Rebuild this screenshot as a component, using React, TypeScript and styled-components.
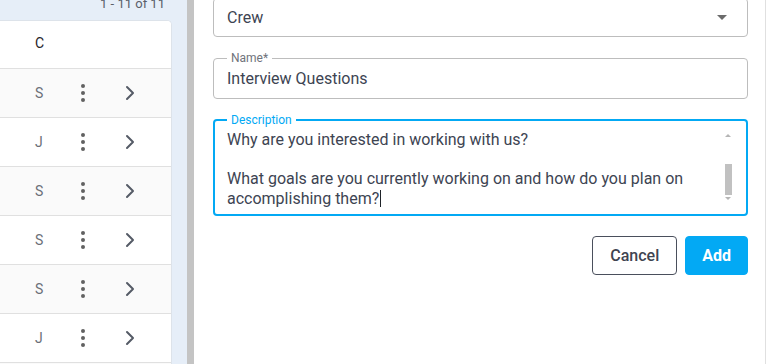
import styled, { createGlobalStyle } from 'styled-components';

const GlobalStyle = createGlobalStyle`
  html, body {
    margin: 0;
    padding: 0;
    background: #ffffff;
    font-family: Roboto, "Liberation Sans", Arial, sans-serif;
  }

  #root {
    height: 364px;
    overflow: hidden;
  }
`;

const rows = [
  { id: 1, letter: 'S' },
  { id: 2, letter: 'J' },
  { id: 3, letter: 'S' },
  { id: 4, letter: 'S' },
  { id: 5, letter: 'S' },
  { id: 6, letter: 'J' },
  { id: 7, letter: 'S' },
];

const MoreIcon = () => (
  <svg width="24" height="24" viewBox="0 0 24 24" aria-hidden>
    <circle cx="12" cy="5" r="2" fill="#616161" />
    <circle cx="12" cy="12" r="2" fill="#616161" />
    <circle cx="12" cy="19" r="2" fill="#616161" />
  </svg>
);

const ChevronIcon = () => (
  <svg width="24" height="24" viewBox="0 0 24 24" aria-hidden>
    <path d="M9 6l6 6-6 6" fill="none" stroke="#555b66" strokeWidth="2" strokeLinecap="round" strokeLinejoin="round" />
  </svg>
);

export default function App() {
  return (
    <>
      <GlobalStyle />
      <Page>
        <ListPane>
          <Pager>
            <span>1 - 11 of 11</span>
          </Pager>
          <Card>
            <Row $header>
              <Letter $header>C</Letter>
            </Row>
            {rows.map(({ id, letter }, index) => (
              <Row key={id} $shade={index % 2 === 0}>
                <Letter>{letter}</Letter>
                <IconCell>
                  <MoreIcon />
                </IconCell>
                <IconCell>
                  <ChevronIcon />
                </IconCell>
              </Row>
            ))}
          </Card>
        </ListPane>
        <Splitter />
        <Dialog>
          <SelectBox>
            <FieldValue>Crew</FieldValue>
            <Caret />
          </SelectBox>
          <Field>
            <Legend>Name*</Legend>
            <FieldValue>Interview Questions</FieldValue>
          </Field>
          <Field $focused>
            <Legend $focused>Description</Legend>
            <TextAreaBody>
              <TextLines>
                <Line>Why are you interested in working with us?</Line>
                <Line>&nbsp;</Line>
                <Line>What goals are you currently working on and how do you plan on</Line>
                <Line>
                  accomplishing them?
                  <Cursor />
                </Line>
              </TextLines>
              <ScrollBar>
                <ArrowUp />
                <Track>
                  <Thumb />
                </Track>
                <ArrowDown />
              </ScrollBar>
            </TextAreaBody>
          </Field>
          <Actions>
            <Button $variant="outline">Cancel</Button>
            <Button $variant="primary">Add</Button>
          </Actions>
        </Dialog>
      </Page>
    </>
  );
}

const Page = styled.div`
  display: flex;
  height: 364px;
  padding-right: 2px;
  box-sizing: border-box;
  overflow: hidden;
  background: #ffffff;
`;

const ListPane = styled.div`
  display: flex;
  flex-direction: column;
  width: 187px;
  flex-shrink: 0;
  background: #e6eef8;
`;

const Pager = styled.div`
  display: flex;
  justify-content: flex-end;
  height: 20px;
  width: 172px;
  padding-right: 7px;
  box-sizing: border-box;

  & > span {
    margin-top: -4px;
    font-size: 13px;
    line-height: 16px;
    color: #5a5f6a;
  }
`;

const Card = styled.div`
  width: 172px;
  flex: 1;
  background: #ffffff;
  border-top: 1px solid #dde3ea;
  border-right: 1px solid #dde3ea;
  border-top-right-radius: 5px;
  box-sizing: border-box;
  overflow: hidden;
`;

const Row = styled.div<{ $header?: boolean; $shade?: boolean }>`
  display: grid;
  grid-template-columns: 36px 47px 24px;
  align-items: center;
  height: ${({ $header }) => ($header ? '44px' : '48px')};
  padding-left: 35px;
  padding-bottom: ${({ $header }) => ($header ? '3px' : '0')};
  background: ${({ $shade }) => ($shade ? '#fafafa' : '#ffffff')};
  border-bottom: 1px solid #e0e0e0;
`;

const Letter = styled.span<{ $header?: boolean }>`
  font-size: 14px;
  color: ${({ $header }) => ($header ? '#1f2329' : '#6b6f78')};
`;

const IconCell = styled.span`
  display: flex;
  width: 24px;
  height: 24px;
  margin-top: -1px;
`;

const Splitter = styled.div`
  width: 7px;
  flex-shrink: 0;
  background: #c4c4c4;
`;

const Dialog = styled.div`
  flex: 1;
  display: flex;
  flex-direction: column;
  gap: 14px;
  margin-top: -2px;
  padding: 0 17px 0 19px;
  border-right: 1px solid #e0e0e0;
  background: #ffffff;
`;

const SelectBox = styled.div`
  display: flex;
  align-items: center;
  justify-content: space-between;
  height: 39px;
  padding: 0 20px 0 13px;
  border: 1px solid #bdbdbd;
  border-radius: 4px;
  box-sizing: border-box;
`;

const Caret = styled.span`
  width: 0;
  height: 0;
  border-left: 5px solid transparent;
  border-right: 5px solid transparent;
  border-top: 5px solid #6b6b6b;
`;

const FieldValue = styled.span`
  font-size: 16px;
  line-height: 19px;
  color: #3d4452;
`;

const Field = styled.fieldset<{ $focused?: boolean }>`
  display: flex;
  flex-direction: column;
  margin: 0;
  min-width: 0;
  padding: ${({ $focused }) => ($focused ? '1px 12px 6px' : '4px 13px 10px')};
  border: ${({ $focused }) => ($focused ? '2px solid #03a9f4' : '1px solid #bdbdbd')};
  border-radius: 4px;
`;

const Legend = styled.legend<{ $focused?: boolean }>`
  padding: 0 4px;
  font-size: 12px;
  line-height: 14px;
  color: ${({ $focused }) => ($focused ? '#03a9f4' : '#6f737b')};
`;

const TextAreaBody = styled.div`
  display: flex;
  align-items: flex-start;
`;

const TextLines = styled.div`
  flex: 1;
  padding-top: 2px;
`;

const Line = styled.div`
  font-size: 16px;
  line-height: 19.5px;
  color: #3d4452;
  white-space: nowrap;
`;

const Cursor = styled.span`
  display: inline-block;
  width: 1px;
  height: 17px;
  margin-left: 1px;
  vertical-align: -3px;
  background: #1f2329;
`;

const ScrollBar = styled.div`
  display: flex;
  flex-direction: column;
  align-items: center;
  width: 8px;
  height: 67px;
  margin: 5px 2px 0 0;
`;

const ArrowUp = styled.span`
  width: 0;
  height: 0;
  margin: 1px 0 4px;
  border-left: 3px solid transparent;
  border-right: 3px solid transparent;
  border-bottom: 3px solid #b5b5b5;
`;

const ArrowDown = styled.span`
  width: 0;
  height: 0;
  margin-top: 2px;
  border-left: 3px solid transparent;
  border-right: 3px solid transparent;
  border-top: 3px solid #b5b5b5;
`;

const Track = styled.div`
  display: flex;
  flex-direction: column;
  justify-content: flex-end;
  flex: 1;
  width: 7px;
`;

const Thumb = styled.div`
  width: 7px;
  height: 31px;
  background: #c1c1c1;
`;

const Actions = styled.div`
  display: flex;
  justify-content: flex-end;
  gap: 8px;
  margin-top: 6px;
`;

const Button = styled.button<{ $variant: 'outline' | 'primary' }>`
  height: 39px;
  padding: ${({ $variant }) => ($variant === 'primary' ? '0 16px' : '0 17px')};
  border-radius: 4px;
  font-family: Roboto, "Liberation Sans", Arial, sans-serif;
  font-size: 16px;
  font-weight: ${({ $variant }) => ($variant === 'primary' ? 700 : 500)};
  color: ${({ $variant }) => ($variant === 'primary' ? '#ffffff' : '#3f4451')};
  background: ${({ $variant }) => ($variant === 'primary' ? '#03a9f4' : '#ffffff')};
  border: 1px solid ${({ $variant }) => ($variant === 'primary' ? '#03a9f4' : '#4a4f5c')};
  cursor: pointer;
`;
